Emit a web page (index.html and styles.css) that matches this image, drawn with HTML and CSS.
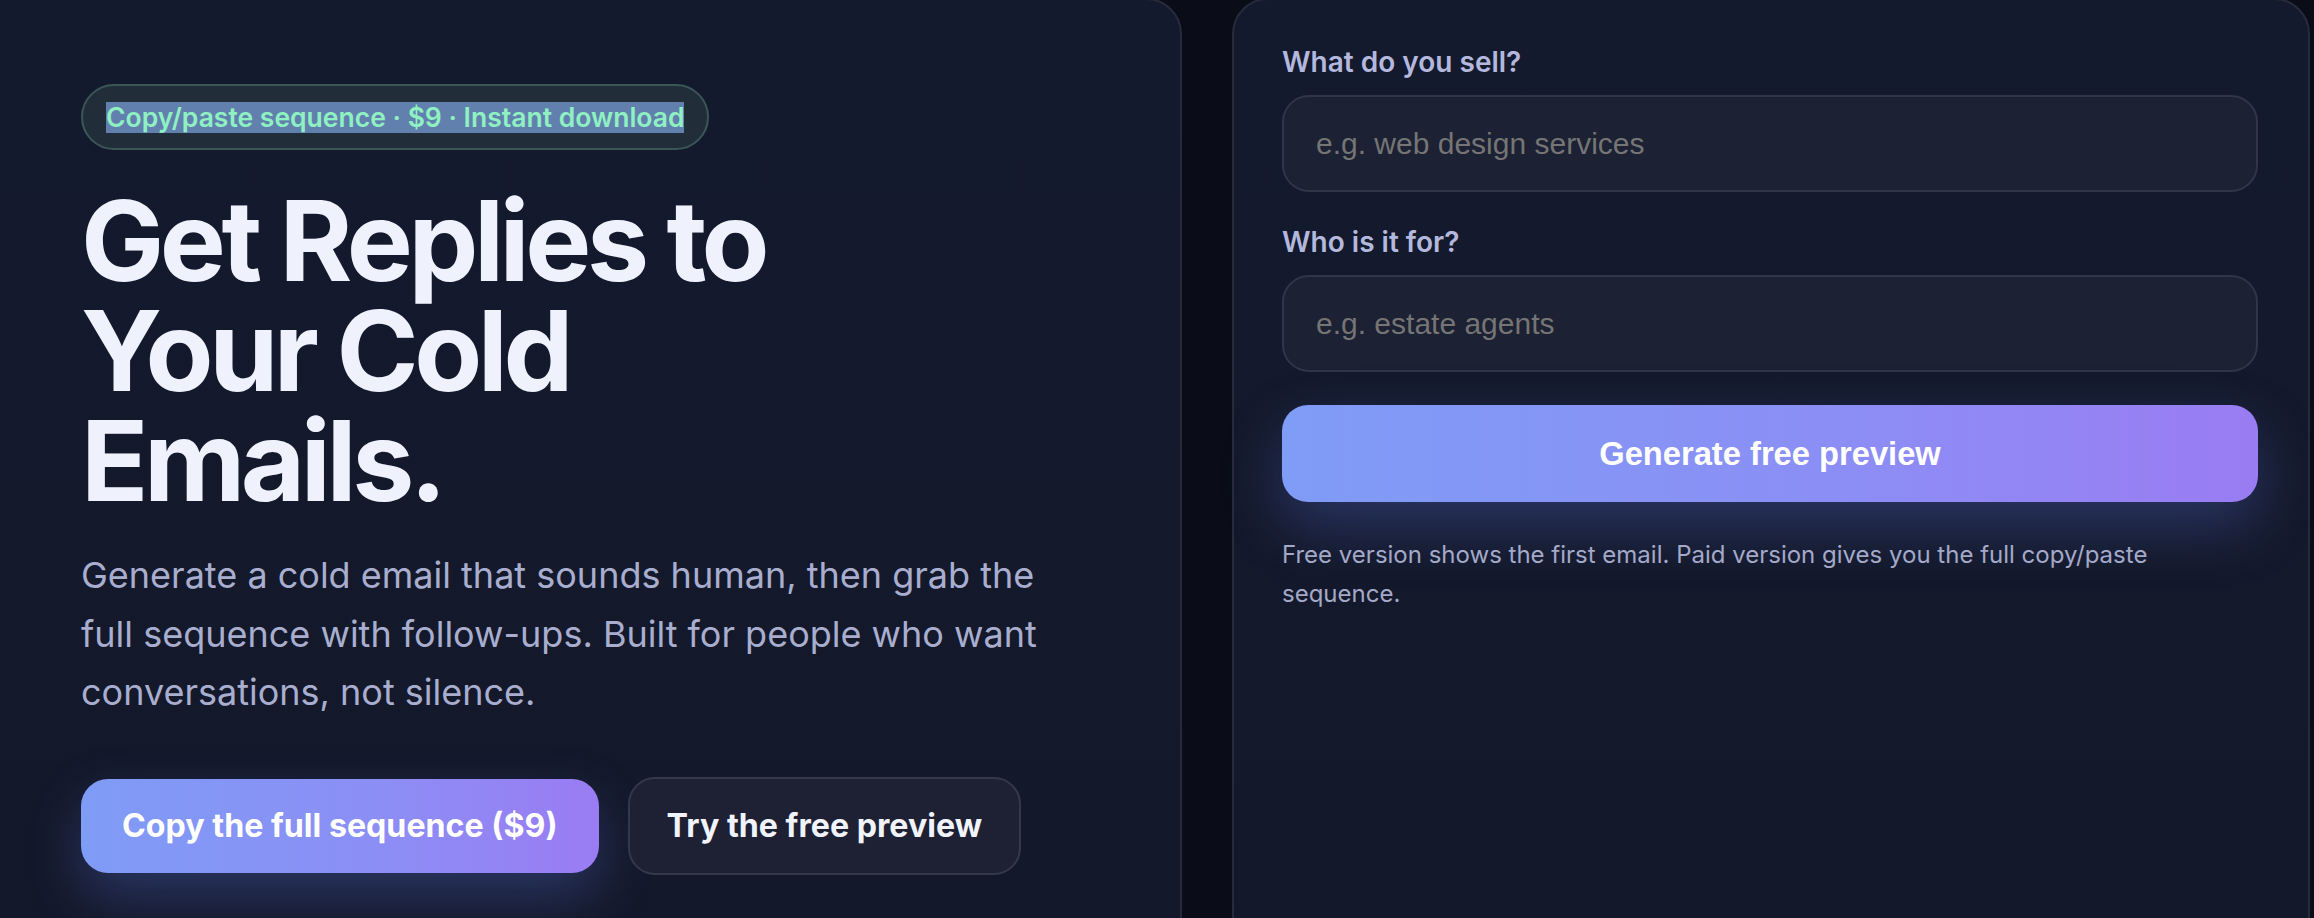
FILE: index.html
```html
<!DOCTYPE html>
<html lang="en">
<head>
<meta charset="utf-8">
<title>Cold Email Sequence</title>
<link rel="stylesheet" href="styles.css">
</head>
<body>
<main class="hero">
  <section class="card card-intro">
    <div class="badge"><span class="sel">Copy/paste sequence · $9 · Instant download</span></div>
    <h1 class="title">Get Replies to<br>Your Cold<br>Emails.</h1>
    <p class="lead">Generate a cold email that sounds human, then grab the full sequence with follow-ups. Built for people who want conversations, not silence.</p>
    <div class="actions">
      <a class="btn btn-primary" href="#">Copy the full sequence ($9)</a>
      <a class="btn btn-ghost" href="#">Try the free preview</a>
    </div>
  </section>
  <section class="card card-form">
    <form class="form">
      <div class="field">
        <label class="label" for="sell">What do you sell?</label>
        <input class="input" id="sell" type="text" placeholder="e.g. web design services">
      </div>
      <div class="field">
        <label class="label" for="who">Who is it for?</label>
        <input class="input" id="who" type="text" placeholder="e.g. estate agents">
      </div>
      <button class="generate" type="button">Generate free preview</button>
      <p class="note">Free version shows the first email. Paid version gives you the full copy/paste sequence.</p>
    </form>
  </section>
</main>
</body>
</html>
```

FILE: styles.css
```css
* { box-sizing: border-box; }

html, body {
  margin: 0;
  padding: 0;
  background: #0a0d17;
  overflow: hidden;
}

body {
  font-family: Inter, "Noto Sans", sans-serif;
  color: #eef0fb;
}

.hero {
  display: grid;
  grid-template-columns: 1222px 1078px;
  gap: 50px;
  margin: -2px 0 0 -40px;
  width: 2354px;
}

.card {
  min-height: 1000px;
  border: 2px solid #262b3c;
  border-radius: 36px;
  background: linear-gradient(180deg, #141a2e 0%, #131829 100%);
}

.card-intro {
  padding: 84px 80px 0 119px;
}

.badge {
  display: inline-flex;
  align-items: center;
  height: 66px;
  padding: 0 23px;
  border: 2px solid #3a5756;
  border-radius: 999px;
  background: #212d39;
  font-size: 26.5px;
  font-weight: 600;
  line-height: 31px;
  color: #8ff0c2;
}

.sel {
  background: #6280ae;
}

.title {
  margin: 36px 0 0;
  font-size: 111px;
  line-height: 110px;
  font-weight: 700;
  letter-spacing: -0.04em;
  color: #eff1fc;
}

.lead {
  margin: 30px 0 0;
  max-width: 1005px;
  font-size: 36px;
  line-height: 58.5px;
  color: #a9aecf;
}

.actions {
  display: flex;
  align-items: center;
  gap: 29px;
  margin-top: 55px;
}

.btn {
  display: inline-flex;
  align-items: center;
  justify-content: center;
  font-size: 32.2px;
  font-weight: 700;
  text-decoration: none;
  border-radius: 27px;
}

.btn-primary {
  height: 94px;
  padding: 0 41px;
  color: #ffffff;
  background: linear-gradient(90deg, #7f9cf6 0%, #8b8ff5 55%, #9a7cf3 100%);
  box-shadow: 0 24px 55px rgba(96, 118, 230, 0.3);
}

.btn-ghost {
  height: 98px;
  padding: 0 37px;
  color: #f1f3fc;
  background: #1d2133;
  border: 2px solid #33384b;
}

.card-form {
  padding: 45px 50px 0 48px;
}

.form {
  display: flex;
  flex-direction: column;
}

.field {
  display: flex;
  flex-direction: column;
  gap: 16px;
  margin-bottom: 33px;
}

.label {
  font-size: 28px;
  line-height: 34px;
  font-weight: 600;
  color: #b3b8dc;
}

.input {
  height: 97px;
  padding: 0 32px;
  border: 2px solid #303547;
  border-radius: 27px;
  background: #1c2133;
  font-family: "Liberation Sans", Arial, sans-serif;
  font-size: 30px;
  color: #e6e8f5;
  outline: none;
}

.input::placeholder {
  color: #757575;
}

.generate {
  height: 97px;
  border: none;
  border-radius: 26px;
  background: linear-gradient(90deg, #7f9cf6 0%, #8b8ff5 55%, #9a7cf3 100%);
  box-shadow: 0 24px 60px rgba(96, 118, 230, 0.3);
  font-family: "Liberation Sans", Arial, sans-serif;
  font-size: 32.7px;
  font-weight: 700;
  color: #ffffff;
  cursor: pointer;
}

.note {
  margin: 33px 0 0;
  font-size: 24px;
  line-height: 39px;
  color: #a4a9c8;
}
```
